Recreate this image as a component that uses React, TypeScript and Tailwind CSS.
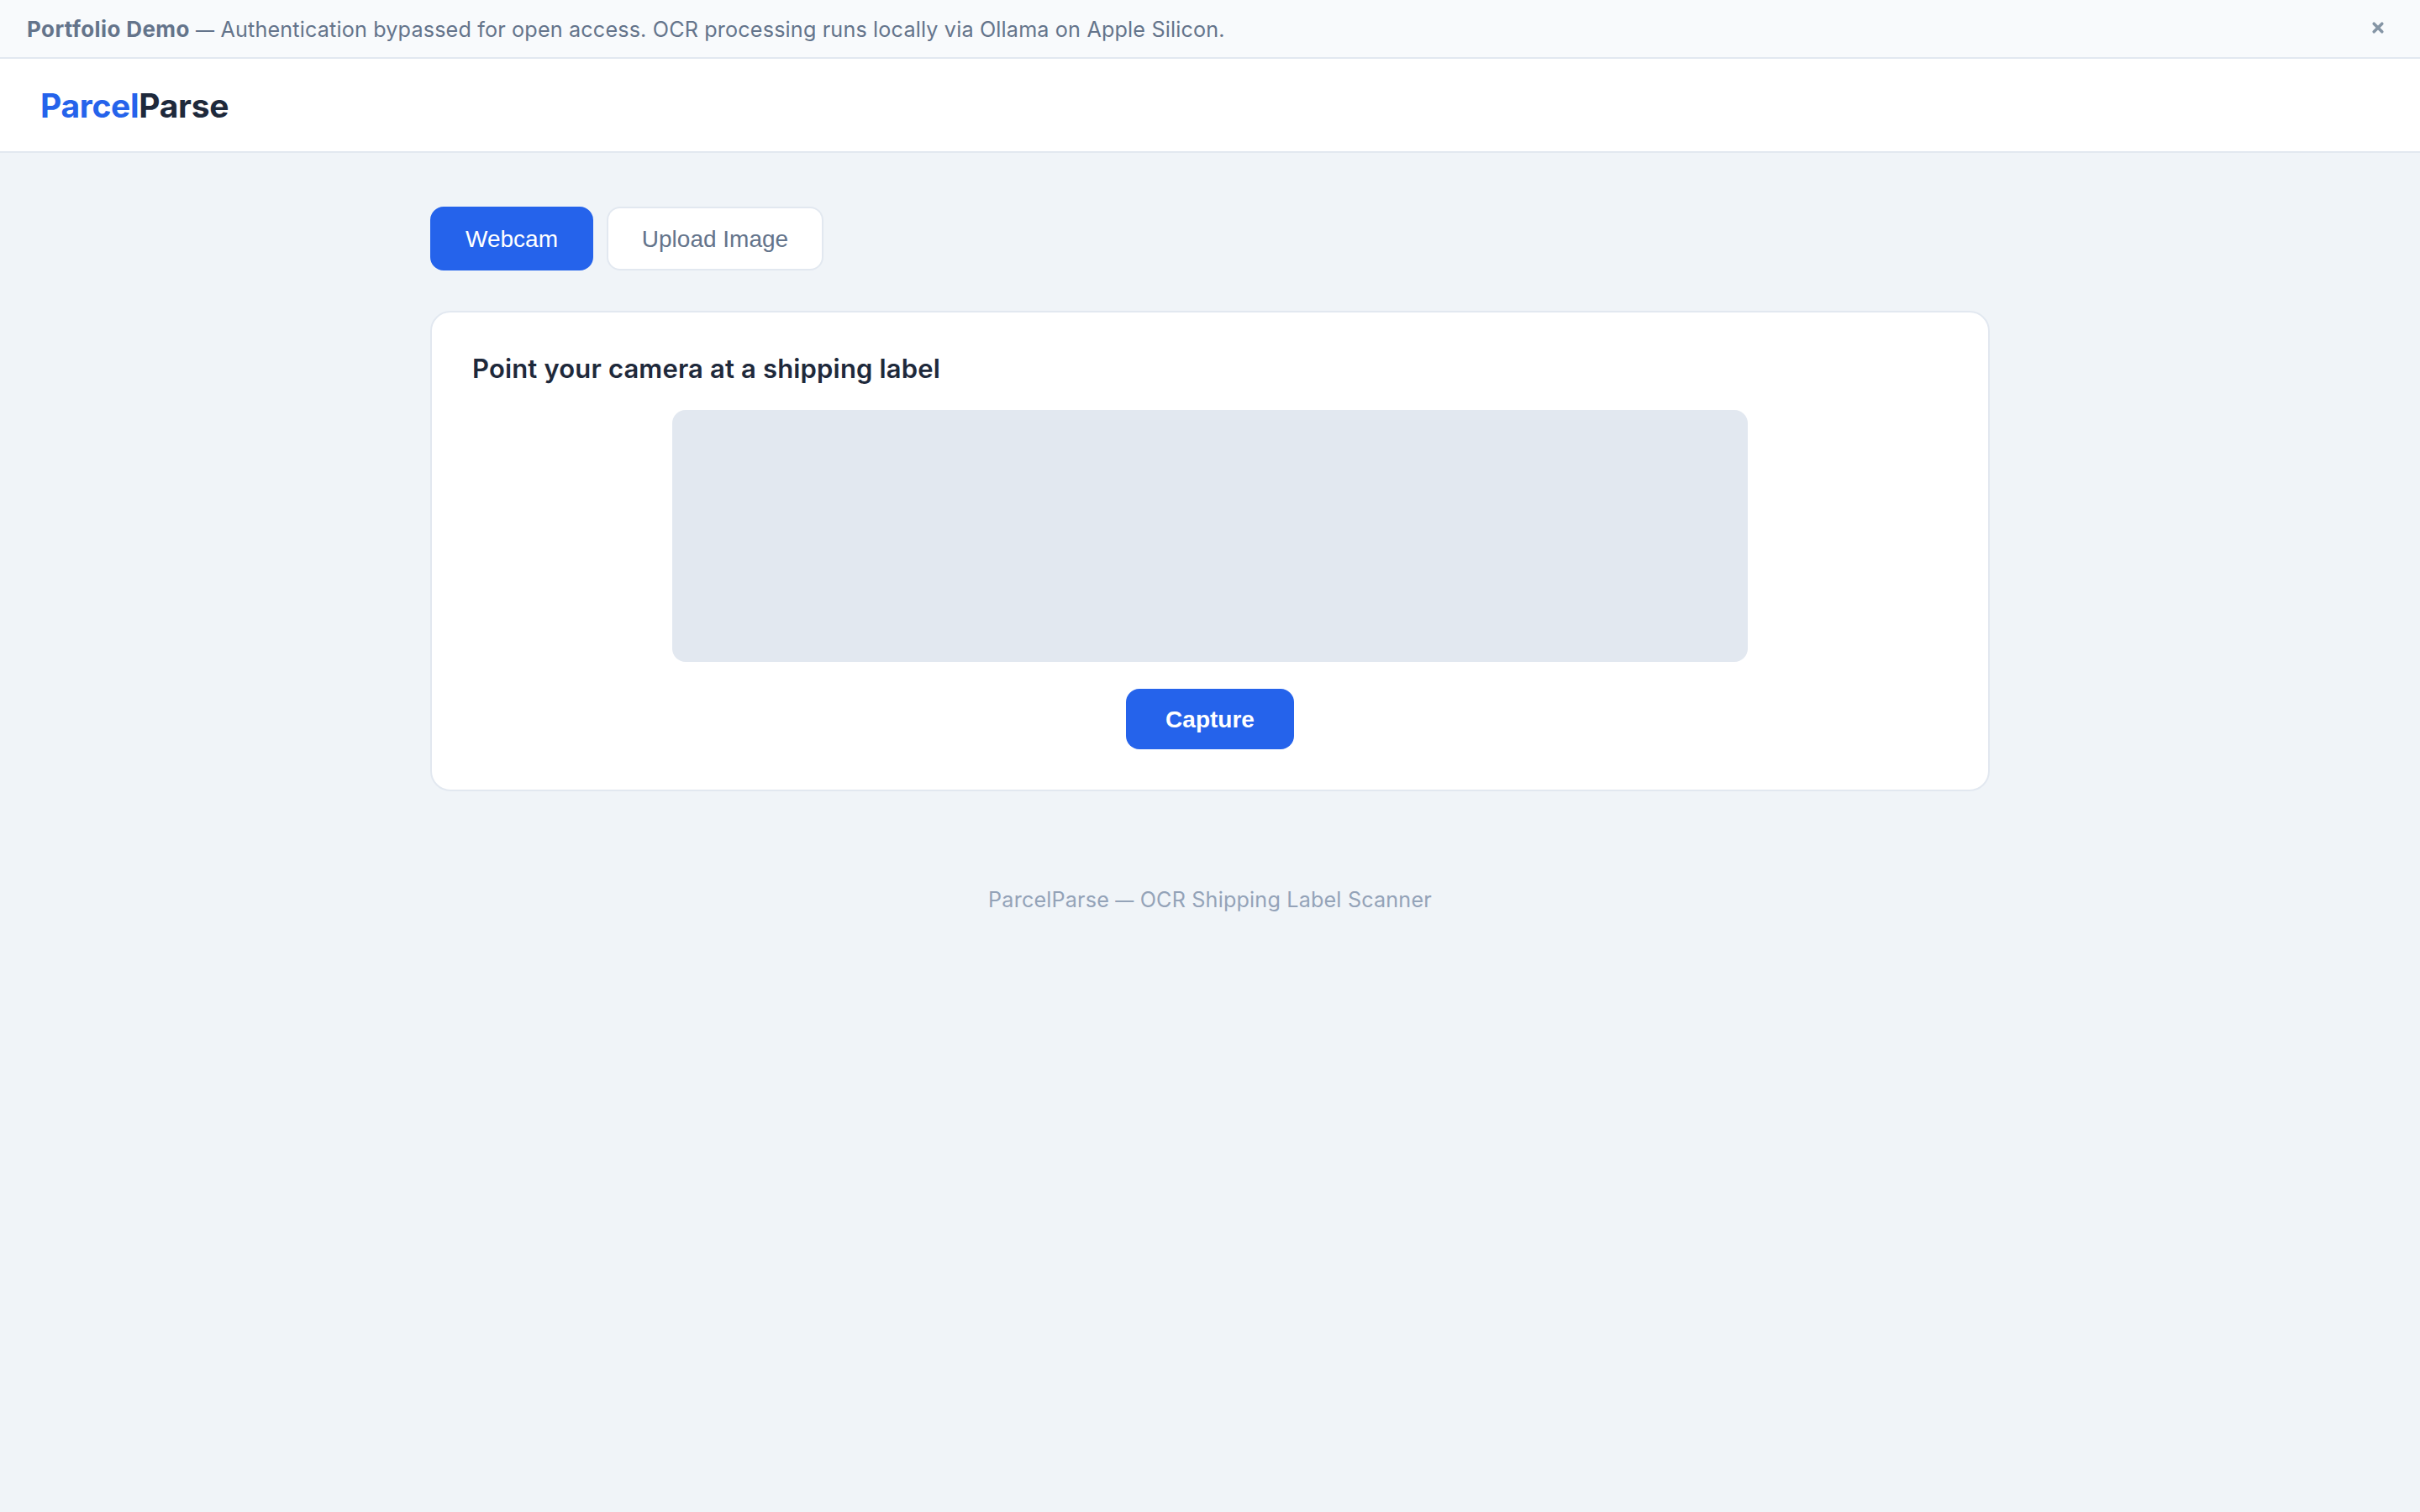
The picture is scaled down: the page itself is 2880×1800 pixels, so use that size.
import { useState } from "react";
import clsx from "clsx";

type Mode = "webcam" | "upload";

const tabs: { key: Mode; label: string; width: string }[] = [
  { key: "webcam", label: "Webcam", width: "w-[194px]" },
  { key: "upload", label: "Upload Image", width: "w-[258px]" },
];

function DemoBanner({ onClose }: { onClose: () => void }) {
  return (
    <div className="flex h-[70px] items-center justify-between border-b-2 border-[#e2e8f0] bg-[#f8fafc] pr-[42px] pl-8 text-[#64748b]">
      <p className="pt-0.5 text-[25.2px] leading-[39px] tracking-[0.15px] whitespace-nowrap">
        <strong className="text-[26px] font-bold tracking-[0.4px]">Portfolio Demo</strong>{" "}
        <span className="text-[22px] font-medium">—</span>{" "}
        Authentication bypassed for open access. OCR processing runs locally via Ollama on Apple Silicon.
      </p>
      <button type="button" aria-label="Dismiss" onClick={onClose} className="-mt-0.5 text-[#8595a5]">
        <svg className="h-4 w-4" viewBox="0 0 16 16" fill="none" stroke="currentColor" strokeWidth="3.6" strokeLinecap="round">
          <path d="M3.2 3.2l9.6 9.6M12.8 3.2l-9.6 9.6" />
        </svg>
      </button>
    </div>
  );
}

function Header() {
  return (
    <header className="flex h-28 items-center border-b-2 border-[#e2e8f0] bg-white px-12">
      <h1 className="pt-0.5 text-[39px] leading-[60px] font-bold tracking-[-0.3px] text-[#1e293b]">
        <span className="text-[#2563eb]">Parcel</span>Parse
      </h1>
    </header>
  );
}

export default function App() {
  const [mode, setMode] = useState<Mode>("webcam");
  const [showBanner, setShowBanner] = useState(true);

  return (
    <div className="min-h-screen bg-[#f0f4f8] font-['Inter',sans-serif]">
      {showBanner ? <DemoBanner onClose={() => setShowBanner(false)} /> : null}
      <Header />

      <main className="mx-auto w-[1920px] px-8 pt-16">
        {/* Mode tabs */}
        <div className="flex gap-4">
          {tabs.map((tab) => (
            <button
              key={tab.key}
              type="button"
              onClick={() => setMode(tab.key)}
              className={clsx(
                "h-19 rounded-2xl border-2 pt-0.5 font-['Liberation_Sans',Arial,sans-serif] text-[28px] leading-8 whitespace-nowrap",
                tab.width,
                mode === tab.key
                  ? "border-[#2563eb] bg-[#2563eb] text-white"
                  : "border-[#e2e8f0] bg-white text-[#64748b]"
              )}
            >
              {tab.label}
            </button>
          ))}
        </div>

        {/* Capture card */}
        <section className="mt-12 flex h-[572px] flex-col rounded-3xl border-2 border-[#e2e8f0] bg-white p-12 pt-[41px]">
          <h2 className="text-[31px] leading-[52px] font-semibold tracking-[0.16px] text-[#1e293b]">
            Point your camera at a shipping label
          </h2>
          <div className="mx-auto mt-[23px] h-[300px] w-[1280px] rounded-2xl bg-[#e2e8f0]" />
          <button
            type="button"
            className="mx-auto mt-8 h-18 w-[200px] rounded-2xl bg-[#2563eb] pt-0.5 font-['Liberation_Sans',Arial,sans-serif] text-[28px] leading-8 font-bold text-white"
          >
            Capture
          </button>
        </section>
      </main>

      <footer className="mt-27 text-center text-[25.2px] leading-[42px] tracking-[0.16px] text-[#94a3b8]">
        ParcelParse <span className="text-[22px] font-medium">—</span> OCR Shipping Label Scanner
      </footer>
    </div>
  );
}
